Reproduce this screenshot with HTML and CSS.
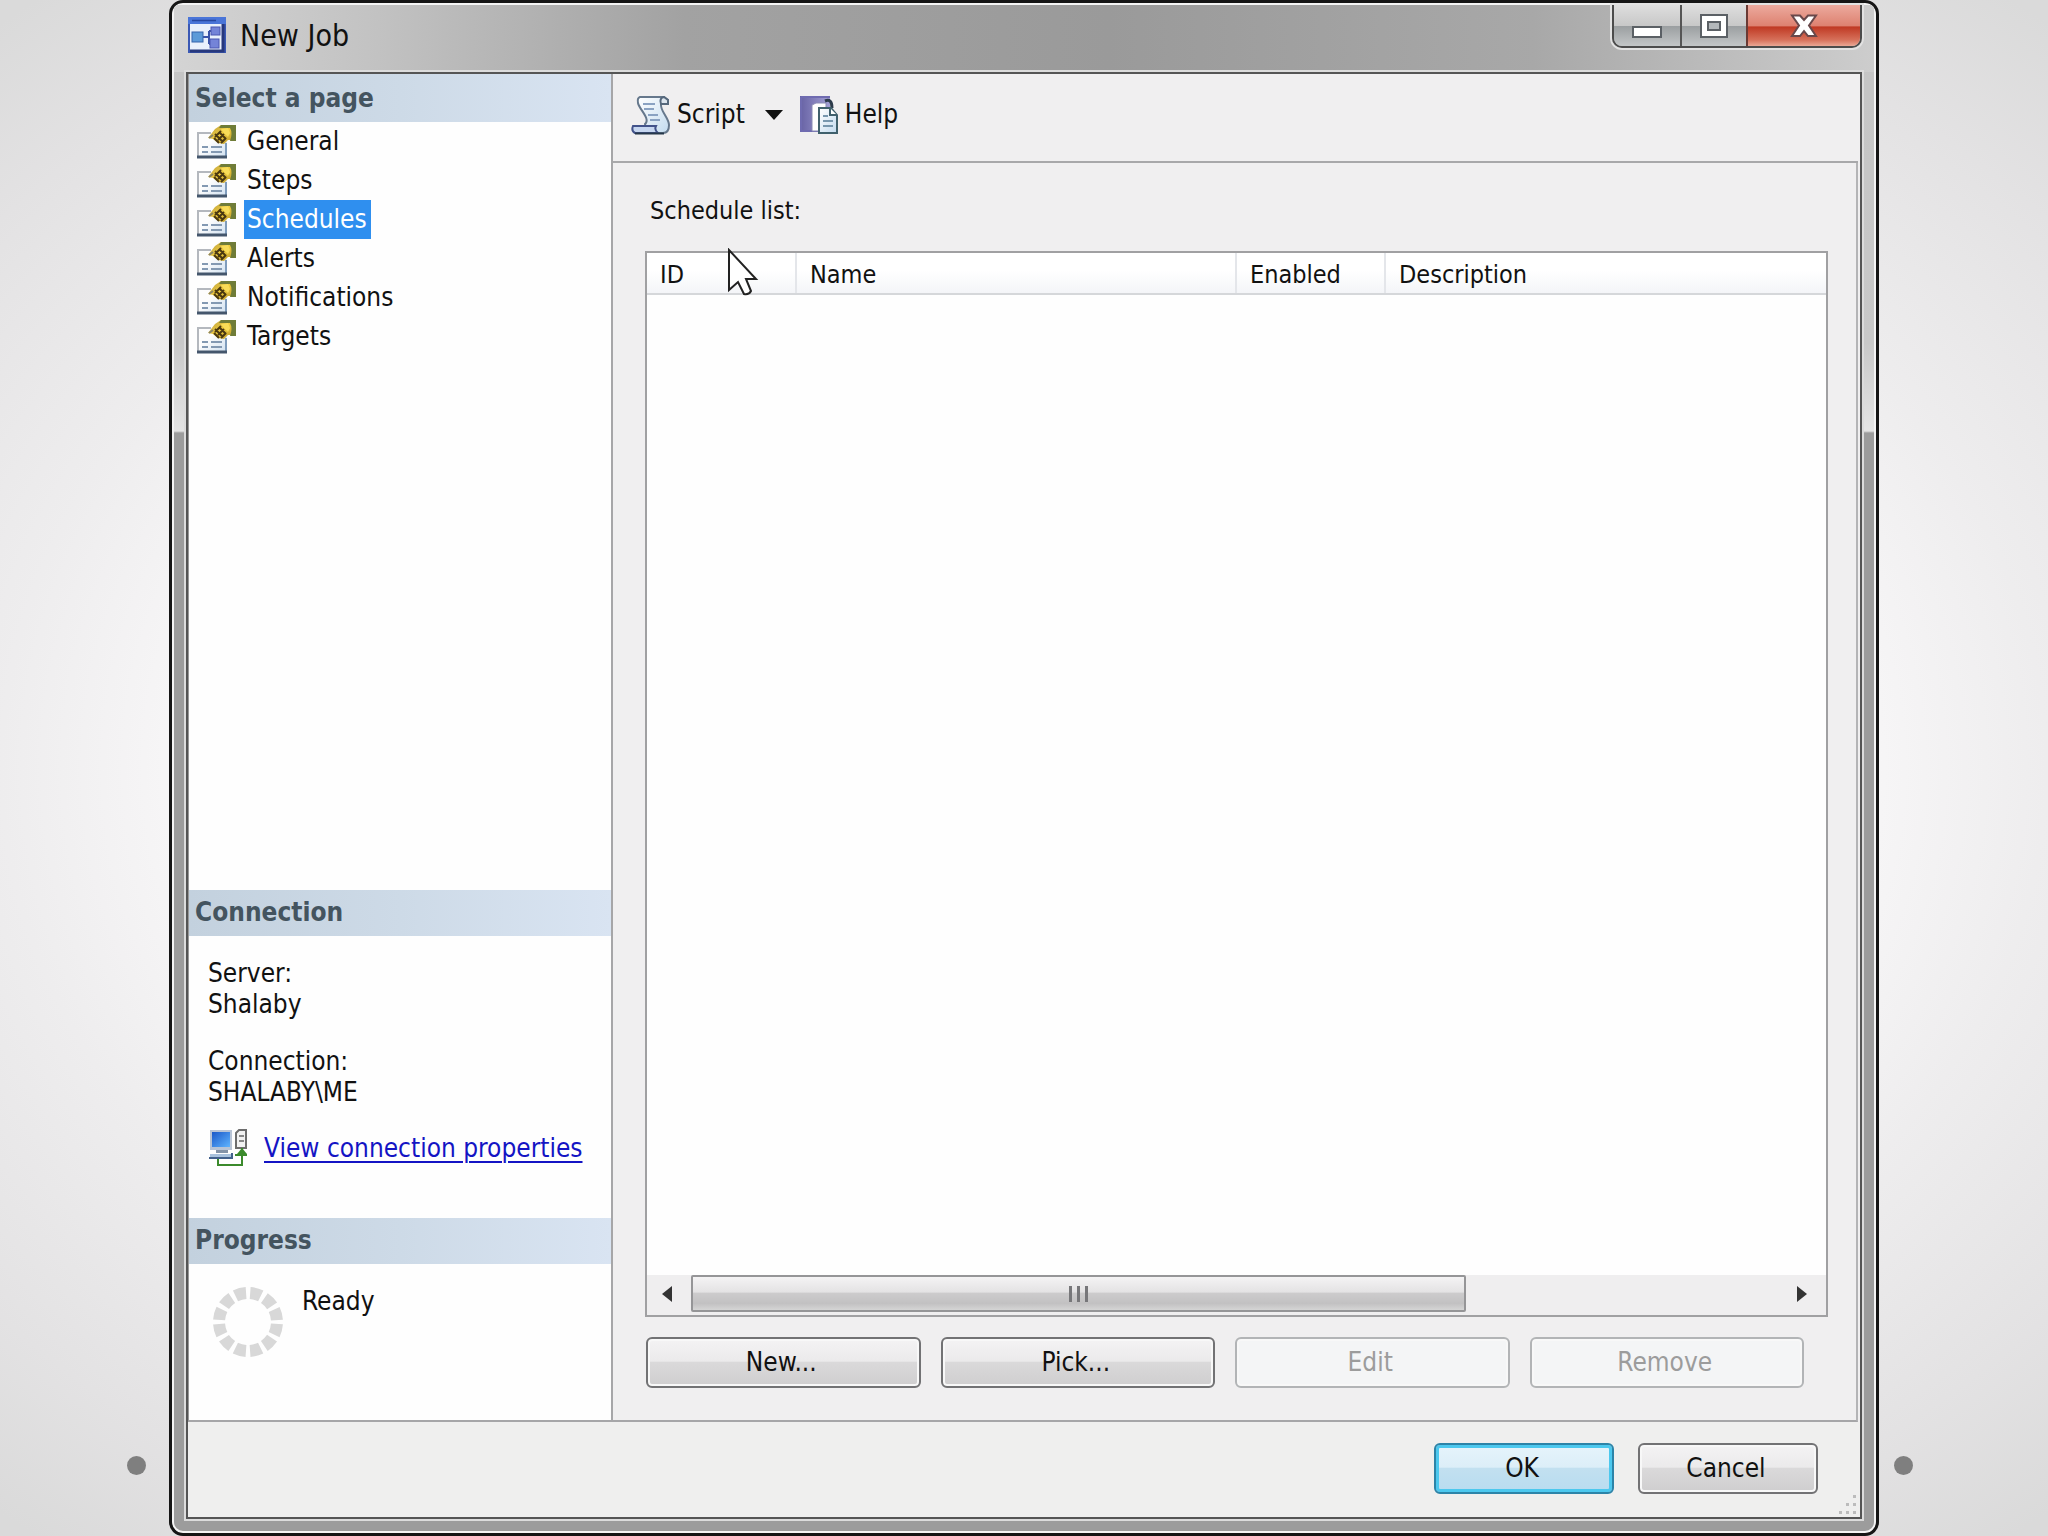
FILE: index.html
```html
<!DOCTYPE html>
<html lang="en">
<head>
<meta charset="utf-8">
<title>New Job</title>
<link rel="stylesheet" href="styles.css">
</head>
<body>
<svg class="defs" width="0" height="0" aria-hidden="true">
  <defs>
    <linearGradient id="gold" x1="0" y1="0" x2="1" y2="1"><stop offset="0" stop-color="#b59a42"/><stop offset=".5" stop-color="#f0cc3e"/><stop offset="1" stop-color="#b08e28"/></linearGradient>
    <linearGradient id="paper" x1="0" y1="0" x2="1" y2="1"><stop offset="0" stop-color="#fff"/><stop offset="1" stop-color="#c3dbef"/></linearGradient>
    <linearGradient id="sheet" x1="0" y1="0" x2="1" y2="1"><stop offset=".4" stop-color="#fdfdfd"/><stop offset="1" stop-color="#cfe0f0"/></linearGradient>
    <linearGradient id="screen" x1="0" y1="0" x2="1" y2="1"><stop offset="0" stop-color="#1a58c8"/><stop offset="1" stop-color="#5fb4ff"/></linearGradient>
    <linearGradient id="book" x1="0" y1="0" x2="1" y2="0"><stop offset="0" stop-color="#6762a4"/><stop offset="1" stop-color="#a29fd4"/></linearGradient>
    <symbol id="page-icon" viewBox="0 0 40 34">
      <path d="M1 8H30V32H1Z" fill="url(#sheet)"/>
      <path d="M1 32V8H14" fill="none" stroke="#b4b8be" stroke-width="2"/>
      <path d="M29 32V18" fill="none" stroke="#7f9cbc" stroke-width="2"/>
      <path d="M0 32H30" fill="none" stroke="#44566c" stroke-width="3"/>
      <path d="M5 22h6M14 22h11M5 27h6M14 27h11" stroke="#8399b2" stroke-width="2"/>
      <path d="M11 13 18 4 24 0H38V15H31L27 19 21 18 16 14Z" fill="url(#gold)"/>
      <path d="M24 0H39V16H33Q36 8 33 3H22Z" fill="#6f7c38"/>
      <path d="M24 4 31 3 33 8 31 12 27 8Z" fill="#f8dc58"/>
      <path d="m18 12 6-6M21 15l6-6M24 18l5-5M18 9l8 8M22 7l7 7M17 13l5 5" fill="none" stroke="#4a3810" stroke-width="2"/>
      <path d="m12 13 4-3" stroke="#8a8468" stroke-width="2"/>
    </symbol>
  </defs>
</svg>
<div class="stage">
  <span class="dot dot-left"></span>
  <main class="window">
    <header class="titlebar">
      <svg class="app-icon" viewBox="0 0 38 36" aria-hidden="true">
        <rect width="38" height="36" fill="#3a58b4"/>
        <rect x="2" y="7" width="33" height="27" fill="#e9f0fc"/>
        <rect width="38" height="7" fill="#4a75d8"/><path d="M4 3.500h24" stroke="#2747a0" stroke-width="1.500"/>
        <path d="M35 7V34H2" fill="none" stroke="#27387c" stroke-width="3"/>
        <path d="M14 20h7M21 14v13M21 14h4M21 27h4" stroke="#3a53a8" stroke-width="2" fill="none"/>
        <rect x="4" y="15" width="11" height="10" fill="#5c9ad8" stroke="#3463ac"/>
        <rect x="23" y="10" width="9" height="8" fill="#7484d8" stroke="#4a56b0"/>
        <rect x="22" y="22" width="9" height="9" fill="#7484d8" stroke="#4a56b0"/>
      </svg>
      <h1 class="title">New Job</h1>
      <div class="caption-buttons">
        <button class="cap cap-min" aria-label="Minimize"><svg width="30" height="14" viewBox="0 0 30 14"><rect x="1" y="2" width="28" height="10" fill="#fff" stroke="#5b6065" stroke-width="2"/></svg></button>
        <button class="cap cap-max" aria-label="Maximize"><svg width="30" height="26" viewBox="0 0 30 26"><rect x="2" y="2" width="26" height="22" fill="#fff" stroke="#5b6065" stroke-width="2"/><rect x="9" y="9" width="12" height="8" fill="#b4b8bb" stroke="#5b6065" stroke-width="2"/></svg></button>
        <button class="cap cap-close" aria-label="Close"><svg width="28" height="24" viewBox="0 0 28 24"><path d="M2 1.500H10L14 6 18 1.500H26L19 11.500 26 22H18L14 17 10 22H2L9 11.500Z" fill="#fff" stroke="#69484a" stroke-width="2"/></svg></button>
      </div>
    </header>
    <div class="client">
      <aside class="sidebar">
        <h2 class="section-head head-first">Select a page</h2>
        <nav class="pages">
          <a class="page" href="#general"><svg class="page-icon"><use href="#page-icon"/></svg><span class="page-name">General</span></a>
          <a class="page" href="#steps"><svg class="page-icon"><use href="#page-icon"/></svg><span class="page-name">Steps</span></a>
          <a class="page" href="#schedules" aria-current="page"><svg class="page-icon"><use href="#page-icon"/></svg><span class="page-name selected">Schedules</span></a>
          <a class="page" href="#alerts"><svg class="page-icon"><use href="#page-icon"/></svg><span class="page-name">Alerts</span></a>
          <a class="page" href="#notifications"><svg class="page-icon"><use href="#page-icon"/></svg><span class="page-name">Notifications</span></a>
          <a class="page" href="#targets"><svg class="page-icon"><use href="#page-icon"/></svg><span class="page-name">Targets</span></a>
        </nav>
        <h2 class="section-head">Connection</h2>
        <div class="connection">
          <dl class="facts">
            <div><dt>Server:</dt><dd>Shalaby</dd></div>
            <div><dt>Connection:</dt><dd>SHALABY\ME</dd></div>
          </dl>
          <div class="conn-link">
            <svg width="40" height="38" viewBox="0 0 40 38" aria-hidden="true">
              <rect x="2" y="1" width="22" height="20" fill="#b8c4d6"/><rect x="4" y="3" width="18" height="15" fill="url(#screen)"/>
              <path d="M8 21h12v3H8z" fill="#8494a8"/><path d="M2 25H24V29H2Z" fill="#a9c2dd"/><path d="M1 29H24V24" fill="none" stroke="#42618c" stroke-width="2"/>
              <path d="M28 4 31 1H38V19H28Z" fill="#f2f2f2" stroke="#6d6d6d" stroke-width="2"/><path d="M31 7h5M31 12h5" stroke="#888" stroke-width="2"/>
              <path d="M10 30V36H34V19M27 26H39" fill="none" stroke="#3b8a2c" stroke-width="2"/><path d="m34 19-5 6h10Z" fill="#3b8a2c"/>
            </svg>
            <a href="#connection">View connection properties</a>
          </div>
        </div>
        <h2 class="section-head">Progress</h2>
        <div class="progress">
          <svg width="72" height="72" viewBox="0 0 72 72" aria-hidden="true"><circle cx="36" cy="36" r="29" fill="none" stroke="#d8d8d8" stroke-width="12" stroke-dasharray="11 4.184" stroke-dashoffset="-2"/></svg>
          <span class="status">Ready</span>
        </div>
      </aside>
      <section class="page-pane">
        <div class="toolbar">
          <button class="tool tool-script">
            <svg width="40" height="40" viewBox="0 0 40 40" aria-hidden="true">
              <path d="M9 2H33L37 5V9H30C29 16 38 23 38 30Q38 38 32 38H16L14 29C20 24 8 14 7 8Q6 3 9 2Z" fill="url(#paper)" stroke="#66788c" stroke-width="2"/>
              <path d="M33 2Q28 3 30 9H37V5Z" fill="#dce5ee" stroke="#56687c" stroke-width="2"/>
              <path d="M12 9h12M13 14h10M17 20h10M19 25h10" stroke="#8aa2c2" stroke-width="2"/>
              <path d="M2 31H25Q23 35 27 38H4Q0 36 2 31Z" fill="#c6d6f0" stroke="#42528a" stroke-width="2"/>
              <path d="M4 38.500H33" stroke="#26384a" stroke-width="2"/>
            </svg>
            <span>Script</span>
            <svg class="arrow" width="18" height="10" viewBox="0 0 18 10" aria-hidden="true"><path d="M0 0H18L9 10Z" fill="#111"/></svg>
          </button>
          <button class="tool">
            <svg width="40" height="40" viewBox="0 0 40 40" aria-hidden="true">
              <path d="M1 1H31V37H1Z" fill="url(#book)"/><path d="M2 2H31M2 2V36H20" fill="none" stroke="#6f6bb0" stroke-width="2"/>
              <path d="M13 10 17 8H27V36H13Z" fill="#fff" stroke="#8b8bb5"/>
              <path d="M26 6Q33 3 33 13" fill="none" stroke="#2d3b4a" stroke-width="3"/>
              <path d="M20 13H32L38 20V38H20Z" fill="url(#paper)" stroke="#40606c" stroke-width="2"/>
              <path d="M31 13V20H38" fill="#fff" stroke="#40606c" stroke-width="2"/>
              <path d="M24 21h5M24 26h10M24 31h10" stroke="#7797ae" stroke-width="2"/>
            </svg>
            <span>Help</span>
          </button>
        </div>
        <div class="content">
          <p class="list-label" id="list-label">Schedule list:</p>
          <div class="list">
            <table class="schedules" aria-labelledby="list-label">
              <colgroup><col class="c-id"><col class="c-name"><col class="c-enabled"><col></colgroup>
              <thead><tr><th>ID</th><th>Name</th><th>Enabled</th><th>Description</th></tr></thead>
            </table>
            <div class="scrollbar">
              <button class="scroll-btn" aria-label="Scroll left"><svg width="10" height="16" viewBox="0 0 10 16"><path d="M10 0V16L0 8Z" fill="#333"/></svg></button>
              <div class="track"><div class="thumb"><i></i><i></i><i></i></div></div>
              <button class="scroll-btn" aria-label="Scroll right"><svg width="10" height="16" viewBox="0 0 10 16"><path d="M0 0V16L10 8Z" fill="#333"/></svg></button>
            </div>
            <svg class="cursor" width="32" height="50" viewBox="0 0 32 50" aria-hidden="true"><path d="M2 2V42L11 34 17 46Q22 47 24 43L19 31H29Z" fill="#fff" stroke="#222" stroke-width="2"/></svg>
          </div>
          <div class="list-actions">
            <button class="btn">New...</button>
            <button class="btn">Pick...</button>
            <button class="btn" disabled>Edit</button>
            <button class="btn" disabled>Remove</button>
          </div>
        </div>
      </section>
      <footer class="footer">
        <button class="btn btn-default">OK</button>
        <button class="btn">Cancel</button>
        <svg class="grip" width="20" height="20" viewBox="0 0 20 20" aria-hidden="true"><path d="M15 0h3v3h-3zM15 8h3v3h-3zM15 16h3v3h-3zM8 8h3v3H8zM8 16h3v3H8zM1 16h3v3H1z" fill="#bcbcbc"/></svg>
      </footer>
    </div>
  </main>
  <span class="dot dot-right"></span>
</div>
</body>
</html>
```
FILE: styles.css
```css
* { box-sizing: border-box; }

body {
  margin: 0;
  font: 26px/31px "DejaVu Sans Condensed", "DejaVu Sans", Tahoma, sans-serif;
  color: #111;
  background: #e4e4e4;
}

h1, h2, p, dl, dd { margin: 0; font-size: inherit; }
.defs { display: block; height: 0; }
button { font: inherit; color: inherit; }
svg { flex: none; }

.stage {
  min-height: 100vh;
  display: grid;
  grid-template-columns: 169fr 1710fr 169fr;
  background: radial-gradient(ellipse 78% 72% at 50% 50%, #fff 0%, #f9f8f9 50%, #eeedee 64%, #e3e2e3 81%, #dadada 93%);
}

.dot {
  align-self: end;
  width: 19px;
  height: 19px;
  margin-bottom: 61px;
  border-radius: 50%;
  background: #7f7f7f;
}
.dot-left { justify-self: end; margin-right: 23px; }
.dot-right { margin-left: 15px; }

.window {
  display: flex;
  flex-direction: column;
  padding: 0 14px 14px;
  border: 3px solid #151515;
  border-radius: 14px;
  background: linear-gradient(#c4c4c4, #c8c8c8 340px, #e4e4e4 428px, #9c9c9c 430px);
  box-shadow: inset 0 0 0 2px #f4f4f4;
  overflow: hidden;
}

.titlebar {
  display: flex;
  height: 67px;
  margin: 2px -12px 0;
  padding: 0 12px;
  background: linear-gradient(90deg, #d4d4d4, #c2c2c2 12%, #a2a2a2 30%, #9a9a9a 55%, #a8a8a8 80%, #cdcdcd);
}
.app-icon { width: 38px; height: 36px; margin: 12px 14px 0 2px; }
.title { font-weight: 400; font-size: 30px; line-height: 62px; }

.caption-buttons {
  display: flex;
  height: 43px;
  margin-left: auto;
  border: 2px solid #4c4c4c;
  border-top: 0;
  border-radius: 0 0 10px 10px;
  overflow: hidden;
  box-shadow: 0 0 0 2px #e2e2e2;
}
.cap {
  display: flex;
  align-items: center;
  justify-content: center;
  padding: 0;
  border: 0;
  background: linear-gradient(#dedede, #c8c8c8 50%, #9b9fa1 52%, #c3c6c7);
}
.cap-min { width: 68px; padding-top: 12px; border-right: 2px solid #555; }
.cap-max { width: 66px; border-right: 2px solid #6a3a34; }
.cap-close { width: 112px; background: linear-gradient(#ecaa9e, #de8271 50%, #c03a24 54%, #d6705a 85%, #eaa795); }

.client {
  flex: 1;
  display: grid;
  grid-template-columns: 425px 1fr;
  grid-template-rows: 1fr auto;
  border: 2px solid #555;
  outline: 2px solid #dcdcdc;
  background: #f0eff0;
}

.sidebar {
  display: flex;
  flex-direction: column;
  border-left: 1px solid #999;
  border-right: 2px solid #a6a6a8;
  border-bottom: 2px solid #a6a6a8;
  background: #fefefe;
}
.section-head {
  height: 46px;
  padding-left: 6px;
  line-height: 44px;
  font-weight: 700;
  color: #44545f;
  background: linear-gradient(90deg, #c3d1de, #cddae7 50%, #d9e4f2);
}
.head-first { height: 48px; line-height: 48px; }

.pages { flex: 1; display: flex; flex-direction: column; }
.page {
  display: flex;
  align-items: center;
  height: 39px;
  padding-left: 8px;
  gap: 7px;
  color: inherit;
  text-decoration: none;
}
.page-icon { width: 40px; height: 34px; }
.page-name { height: 39px; padding: 0 4px 0 3px; line-height: 39px; }
.selected { background: #2f8fef; color: #fff; }

.connection { height: 282px; padding: 22px 0 0 19px; }
.facts { display: grid; gap: 26px; }
.conn-link { display: flex; align-items: center; gap: 16px; margin-top: 21px; }
.conn-link a {
  color: #1414c4;
  text-decoration-thickness: 2px;
  text-underline-offset: 4px;
}

.progress { display: flex; height: 156px; padding: 22px 0 0 23px; gap: 18px; }

.page-pane { display: flex; flex-direction: column; padding-right: 2px; }
.toolbar {
  display: flex;
  align-items: center;
  height: 89px;
  padding: 0 18px 6px;
  gap: 16px;
  border-bottom: 2px solid #a8a8aa;
}
.tool {
  display: flex;
  align-items: center;
  gap: 6px;
  padding: 0;
  border: 0;
  background: none;
}
.arrow { margin-left: 14px; }

.content {
  flex: 1;
  display: flex;
  flex-direction: column;
  padding: 32px 28px 32px 32px;
  border-right: 2px solid #b4b4b6;
  border-bottom: 2px solid #a6a6a8;
}
.list-label, .schedules { font-size: 25px; }
.list-label { padding-left: 5px; }
.list {
  position: relative;
  flex: 1;
  display: flex;
  flex-direction: column;
  justify-content: space-between;
  margin-top: 25px;
  border: 2px solid #a0a0a2;
  background: #fefefe;
}
.schedules { width: 100%; border-collapse: collapse; table-layout: fixed; }
.schedules th {
  height: 41px;
  padding: 4px 0 0 13px;
  line-height: 32px;
  font-weight: 400;
  text-align: left;
  border-right: 2px solid #e4e6ea;
  border-bottom: 2px solid #d5d7da;
  background: linear-gradient(#fff 45%, #f4f5f8);
}
.schedules th:last-child { border-right: 0; }
.c-id { width: 149px; }
.c-name { width: 440px; }
.c-enabled { width: 149px; }

.scrollbar { display: flex; height: 40px; background: #efeeef; }
.scroll-btn {
  display: flex;
  align-items: center;
  justify-content: center;
  width: 44px;
  padding: 0 4px 2px 0;
  border: 0;
  background: none;
}
.track { flex: 1; display: flex; }
.thumb {
  display: flex;
  align-items: center;
  justify-content: center;
  gap: 5px;
  width: 71%;
  height: 37px;
  border: 2px solid #959597;
  border-radius: 2px;
  background: linear-gradient(#f4f3f4, #e4e3e4 45%, #cccbcc 50%, #c2c1c2 80%, #d5d5d5);
}
.thumb i { width: 3px; height: 16px; background: #77777a; }

.cursor { position: absolute; left: 80px; top: -5px; }

.list-actions {
  display: grid;
  grid-template-columns: repeat(4, 1fr);
  gap: 20px;
  padding: 20px 24px 0 1px;
}
.btn {
  height: 51px;
  padding: 0 4px 0 0;
  border: 2px solid #727274;
  border-radius: 6px;
  background: linear-gradient(#f4f3f4, #ebeaeb 47%, #dad9da 50%, #cfcecf);
  box-shadow: inset 0 0 0 2px #f8f8f8;
}
.btn:disabled {
  border-color: #b2b4b6;
  background: #f4f5f6;
  color: #9c9c9c;
}
.btn-default {
  border-color: #2c84a8;
  background: linear-gradient(#e6f4fb, #dceef8 47%, #c2e0f0 50%, #b8dcf0);
  box-shadow: inset 0 0 0 3px #4cc8ee;
}

.footer {
  grid-column: 1 / -1;
  position: relative;
  display: flex;
  justify-content: flex-end;
  gap: 24px;
  padding: 21px 42px 23px;
  background: #efefee;
}
.footer .btn { width: 180px; }
.grip { position: absolute; right: 2px; bottom: 2px; }
```
